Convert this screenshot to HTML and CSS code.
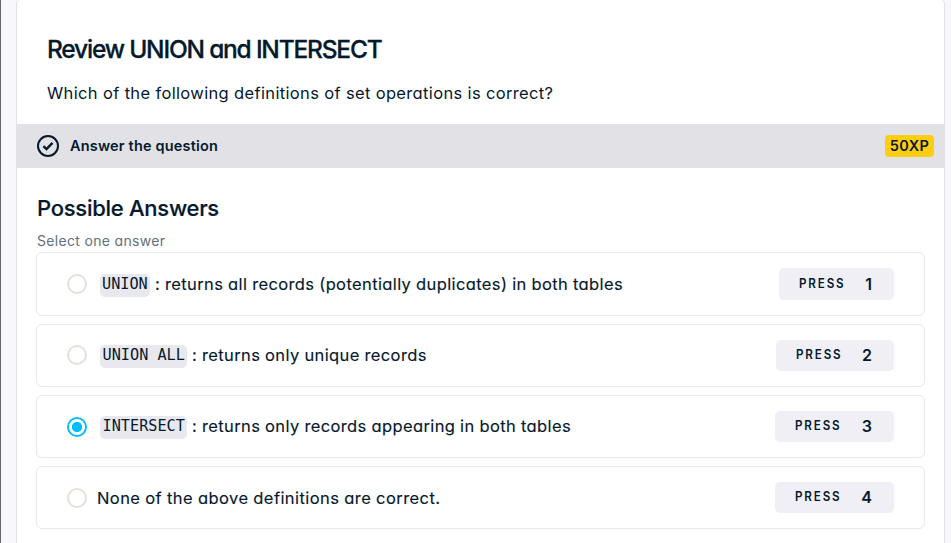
FILE: index.html
```html
<!DOCTYPE html>
<html lang="en">
<head>
<meta charset="utf-8">
<title>Review UNION and INTERSECT</title>
<link rel="stylesheet" href="styles.css">
</head>
<body>
<main class="card">
  <header class="intro">
    <h1 class="title">Review UNION and INTERSECT</h1>
    <p class="question">Which of the following definitions of set operations is correct?</p>
  </header>
  <div class="bar">
    <svg class="check" viewBox="0 0 22 22"><circle cx="11" cy="11" r="10"/><path d="M6.4 11.2l3.1 2.9 6-6.3"/></svg>
    <span class="bar-label">Answer the question</span>
    <span class="xp">50XP</span>
  </div>
  <section class="answers">
    <h2 class="heading">Possible Answers</h2>
    <p class="hint">Select one answer</p>
    <div class="options">
      <label class="option option-first">
        <span class="radio"></span><code class="code code-short"><span>UNION</span></code><span class="text">: returns all records (potentially duplicates) in both tables</span>
        <span class="key k1"><span class="press">PRESS</span><b class="digit">1</b></span>
      </label>
      <label class="option">
        <span class="radio raised"></span><code class="code"><span>UNION ALL</span></code><span class="text">: returns only unique records</span>
        <span class="key k2"><span class="press">PRESS</span><b class="digit">2</b></span>
      </label>
      <label class="option">
        <span class="radio checked"></span><code class="code"><span>INTERSECT</span></code><span class="text">: returns only records appearing in both tables</span>
        <span class="key"><span class="press">PRESS</span><b class="digit">3</b></span>
      </label>
      <label class="option">
        <span class="radio"></span><span class="text plain">None of the above definitions are correct.</span>
        <span class="key"><span class="press">PRESS</span><b class="digit">4</b></span>
      </label>
    </div>
  </section>
</main>
</body>
</html>
```

FILE: styles.css
```css
* { box-sizing: border-box; }
body {
  margin: 0;
  height: 543px;
  overflow: hidden;
  padding: 0 6px 0 15px;
  border-left: 1px solid #65656a;
  background: #f7f7fc;
  color: #05192d;
  font-family: Inter, "Liberation Sans", sans-serif;
  font-feature-settings: "cv11" 1;
}
h1, h2, p { margin: 0; white-space: nowrap; }
.card {
  height: 560px;
  background: #fff;
  border: 1px solid #e1e1e8;
  border-top-color: #f1f1f4;
  border-radius: 5px;
  margin-top: -1px;
}
.intro { height: 124px; padding: 34px 30px 0; }
.title { font-size: 24.5px; line-height: 30px; font-weight: 500; letter-spacing: -1.2px; -webkit-text-stroke: 0.3px; }
.question { font-size: 16.5px; line-height: 24px; margin-top: 17px; letter-spacing: 0.35px; }
.bar {
  height: 44px;
  padding: 0 10px 0 20px;
  display: flex;
  align-items: center;
  background: #e1e1e6;
}
.check { width: 22px; height: 22px; fill: none; stroke: #05192d; stroke-width: 2; }
.check path { stroke-width: 2.4; }
.bar-label { margin-left: 11px; font-size: 14.5px; line-height: 20px; font-weight: 600; letter-spacing: 0.18px; }
.xp {
  margin-left: auto;
  width: 49px;
  height: 22px;
  border-radius: 4px;
  background: #ffce12;
  text-align: center;
  font-size: 14.5px;
  line-height: 22px;
  font-weight: 600;
  letter-spacing: 0.4px;
}
.answers { padding: 25px 19px 0; }
.heading { margin-left: 1px; font-size: 22px; line-height: 30px; font-weight: 500; letter-spacing: -0.27px; -webkit-text-stroke: 0.2px; }
.hint { margin-left: 1px; height: 20px; margin-top: 9px; font-size: 14px; line-height: 18px; letter-spacing: 0.33px; color: #65707c; }
.options { display: grid; gap: 8px; }
.option {
  height: 63px;
  display: flex;
  align-items: center;
  padding: 0 30px;
  border: 1px solid #e8e8ee;
  border-radius: 6px;
  white-space: nowrap;
}
.option-first { height: 64px; }
.radio { width: 20px; height: 20px; border: 2px solid #e5e1da; border-radius: 50%; flex: none; }
.raised { margin-bottom: 1px; }
.checked { border-color: #06bdfc; background: radial-gradient(circle, #06bdfc 4.8px, transparent 5.4px); }
.code {
  display: flex;
  justify-content: center;
  margin: 2px 0 0 13px;
  width: 87px;
  height: 23px;
  border-radius: 5px;
  background: #e8e8ee;
  font: 16.5px/20px "DejaVu Sans Mono", monospace;
}
.code span { transform: scaleX(0.92); }
.code-short { width: 50px; }
.text { margin-left: 5px; font-size: 16.5px; line-height: 24px; letter-spacing: 0.38px; word-spacing: -0.2px; margin-top: -1px; -webkit-text-stroke: 0.15px; }
.plain { margin-left: 10px; margin-top: 0; letter-spacing: 0.43px; }
.key {
  margin-left: auto;
  width: 119px;
  height: 31px;
  padding: 0 22px 2px 20px;
  display: flex;
  align-items: center;
  justify-content: space-between;
  border-radius: 5px;
  background: #efeff5;
}
.k1 { width: 115px; height: 32px; }
.k2 { width: 118px; }
.press { font-size: 12.5px; font-weight: 600; letter-spacing: 2px; transform: scaleX(0.93); transform-origin: left; }
.digit { font-size: 16px; line-height: 20px; font-weight: 600; margin-top: 1px; }
```
